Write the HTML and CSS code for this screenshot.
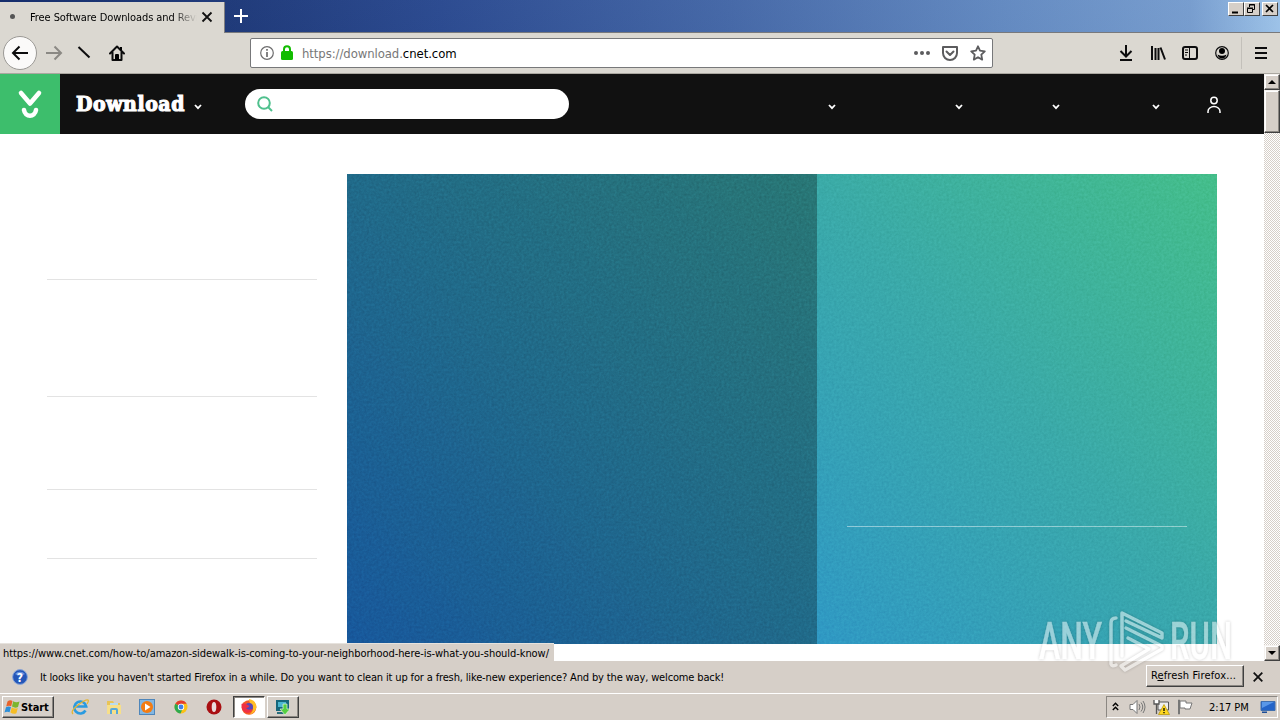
FILE: index.html
```html
<!DOCTYPE html>
<html lang="en">
<head>
    <meta charset="UTF-8">
    <meta name="viewport" content="width=device-width, initial-scale=1.0">
    <title>Free Software Downloads and Reviews</title>
    <link rel="stylesheet" href="styles.css">
</head>
<body>
    <!-- Tabs -->
    <div class="titlebar">
        <div class="tab">
            <span class="tab-dot"></span>
            <span class="tab-title">Free Software Downloads and Reviews</span>
            <svg class="tab-close" width="12" height="12" viewBox="0 0 12 12"><path d="M1.5 1.5l9 9M10.5 1.5l-9 9" stroke="#111" stroke-width="1.8"/></svg>
        </div>
        <svg class="new-tab" width="14" height="14" viewBox="0 0 14 14"><path d="M7 0v14M0 7h14" stroke="#fff" stroke-width="2"/></svg>
        <div class="window-buttons">
            <span class="win-btn"><svg width="15" height="14"><path d="M4 10.5h6" stroke="#000" stroke-width="2"/></svg></span>
            <span class="win-btn"><svg width="15" height="14" fill="none" stroke="#000"><path d="M5.5 5V2.500h5v5H9M5 3h6M3.500 6.500h5v4h-5zM3 6h6"/></svg></span>
            <span class="win-btn win-close"><svg width="15" height="14"><path d="M4 3l7 7M11 3l-7 7" stroke="#000" stroke-width="1.700"/></svg></span>
        </div>
    </div>

    <!-- Navigation toolbar -->
    <div class="toolbar">
        <span class="back"><svg width="18" height="16" viewBox="0 0 18 16" fill="none" stroke="#0c0c0d" stroke-width="2"><path d="M17 8H2M8.500 1.500L2 8l6.500 6.500"/></svg></span>
        <svg class="forward" width="18" height="16" viewBox="0 0 18 16" fill="none" stroke="#8b8984" stroke-width="2"><path d="M1 8h15M9.500 1.500L16 8l-6.500 6.500"/></svg>
        <svg class="reload" width="14" height="14" viewBox="0 0 14 14"><path d="M1.500 1l11 10.500" stroke="#0c0c0d" stroke-width="2"/></svg>
        <svg class="home" width="16" height="16" viewBox="0 0 16 16"><path d="M1 8.500L8 1.500l7 7M3.500 7.500V15h9V7.500" fill="none" stroke="#0c0c0d" stroke-width="2" stroke-linejoin="round" stroke-linecap="round"/><path d="M6 15v-5q0-1 1-1h2q1 0 1 1v5zM11 2h2v3h-2z"/></svg>
        <div class="urlbar">
            <svg width="14" height="14" viewBox="0 0 14 14"><circle cx="7" cy="7" r="6.300" fill="none" stroke="#6d6d6e" stroke-width="1.200"/><path d="M7 6v5M7 3v1.700" stroke="#6d6d6e" stroke-width="1.700"/></svg>
            <svg class="lock" width="12" height="15" viewBox="0 0 12 15"><rect y="6" width="12" height="9" rx="1.500" fill="#12bc00"/><path d="M3 7V4.200a3 3 0 0 1 6 0V7" fill="none" stroke="#12bc00" stroke-width="2"/></svg>
            <span class="url">https://download.<b>cnet.com</b></span>
            <svg class="dots" width="16" height="4" viewBox="0 0 16 4" fill="#5c5c5e"><circle cx="2" cy="2" r="2"/><circle cx="8" cy="2" r="2"/><circle cx="14" cy="2" r="2"/></svg>
            <svg class="pocket" width="16" height="15" viewBox="0 0 16 15" fill="none" stroke="#5c5c5e" stroke-width="2" stroke-linejoin="round"><path d="M1 1h14v6a7 7 0 0 1-14 0z"/><path d="M4.500 5.500L8 9l3.500-3.500" stroke-linecap="round"/></svg>
            <svg class="star" width="16" height="16" viewBox="0 0 16 16"><path d="M8 1.300l2 4.400 4.800.6-3.500 3.300.9 5L8 12.200l-4.200 2.400.9-5L1.200 6.300 6 5.700z" fill="none" stroke="#5c5c5e" stroke-width="1.800" stroke-linejoin="round"/></svg>
        </div>
        <div class="toolbar-right">
            <svg width="16" height="16" viewBox="0 0 16 16" fill="none" stroke="#0c0c0d" stroke-width="2"><path d="M8 0v11M2.500 6L8 11.500 13.500 6M2 15h12"/></svg>
            <svg width="16" height="16" viewBox="0 0 16 16" fill="none" stroke="#0c0c0d" stroke-width="2"><path d="M2 1v14M5.500 3v12M8.500 3v12M10.500 2.500L15 14.500"/></svg>
            <svg width="16" height="16" viewBox="0 0 16 16" fill="none" stroke="#0c0c0d" stroke-width="2"><rect x="1" y="2" width="14" height="12" rx="2"/><path d="M7.500 2v12M3 5h3M3 7.500h3M3 10h2" stroke-width="1"/></svg>
            <svg width="16" height="16" viewBox="0 0 16 16"><circle cx="8" cy="8" r="6.300" fill="none" stroke="#0c0c0d" stroke-width="1.200"/><circle cx="8" cy="6" r="3"/><path d="M3.500 9.500q4.500 2.500 9 0-1 4-4.500 4t-4.500-4z"/></svg>
            <span class="separator"></span>
            <svg class="menu" width="12" height="12" viewBox="0 0 12 12" stroke="#0c0c0d" stroke-width="2"><path d="M0 1h12M0 6h12M0 11h12"/></svg>
        </div>
    </div>

    <!-- Page -->
    <div class="viewport">
        <div class="page">
            <header class="site-header">
                <div class="logo">
                    <svg width="26" height="30" viewBox="0 0 26 30" fill="none" stroke="#fff" stroke-linecap="round" stroke-linejoin="round"><path d="M4 4l9 10.500L22 4" stroke-width="4.600"/><path d="M7 21c1.200 7.600 10.800 7.600 12 0" stroke-width="4.600"/></svg>
                </div>
                <span class="site-name">Download</span>
                <svg class="caret" viewBox="0 0 8 6"><path d="M1 1l3 3.200L7 1"/></svg>
                <div class="search">
                    <svg width="16" height="16" viewBox="0 0 16 16" fill="none" stroke="#4fc08d" stroke-width="2"><circle cx="7" cy="7" r="5.800"/><path d="M11 11l4 4"/></svg>
                </div>
                <nav class="site-nav">
                    <svg class="caret" viewBox="0 0 8 6"><path d="M1 1l3 3.200L7 1"/></svg>
                    <svg class="caret" viewBox="0 0 8 6"><path d="M1 1l3 3.200L7 1"/></svg>
                    <svg class="caret" viewBox="0 0 8 6"><path d="M1 1l3 3.200L7 1"/></svg>
                    <svg class="caret" viewBox="0 0 8 6"><path d="M1 1l3 3.200L7 1"/></svg>
                    <svg class="user" width="14" height="18" viewBox="0 0 14 18" fill="none" stroke="#fff" stroke-width="1.500"><circle cx="7" cy="4.500" r="3.200"/><path d="M1 17v-1.500a6 5 0 0 1 12 0V17"/></svg>
                </nav>
            </header>
            <main class="content">
                <aside class="sidebar">
                    <div class="side-item item-1"></div>
                    <div class="side-item item-2"></div>
                    <div class="side-item item-3"></div>
                    <div class="side-item item-4"></div>
                </aside>
                <section class="hero">
                    <svg class="grain" width="870" height="470">
                        <filter id="noise" x="0" y="0" width="100%" height="100%" color-interpolation-filters="sRGB"><feTurbulence type="fractalNoise" baseFrequency="0.4" numOctaves="3"/><feColorMatrix values="1 0 0 0 0  1 0 0 0 0  1 0 0 0 0  0 0 0 0 1"/></filter>
                        <rect width="870" height="470" filter="url(#noise)"/>
                    </svg>
                    <div class="hero-main"></div>
                    <div class="hero-side"><div class="hero-line"></div></div>
                </section>
            </main>
        </div>
        <div class="scrollbar">
            <span class="scroll-btn"><svg width="8" height="4"><path d="M0 4l4-4 4 4z"/></svg></span>
            <span class="scroll-thumb"></span>
            <span class="scroll-btn scroll-down"><svg width="8" height="4"><path d="M0 0l4 4 4-4z"/></svg></span>
        </div>
        <div class="status">https://www.cnet.com/how-to/amazon-sidewalk-is-coming-to-your-neighborhood-here-is-what-you-should-know/</div>
    </div>

    <!-- Notification -->
    <div class="notification">
        <svg width="16" height="16" viewBox="0 0 16 16"><circle cx="8" cy="8" r="7.400" fill="#2456b8" stroke="#8aa6d8"/><path d="M3 5a6 5 0 0 1 10 0q-5 3-10 0" fill="#6b94e0"/><text x="8" y="12.500" class="help-mark">?</text></svg>
        <span class="message">It looks like you haven't started Firefox in a while. Do you want to clean it up for a fresh, like-new experience? And by the way, welcome back!</span>
        <button class="refresh">R<u>e</u>fresh Firefox...</button>
        <svg class="note-close" width="10" height="10" viewBox="0 0 10 10"><path d="M.7.7l8.600 8.600M9.300.7L.7 9.300" stroke="#111" stroke-width="1.800"/></svg>
    </div>

    <!-- Taskbar -->
    <div class="taskbar">
        <div class="start">
            <svg width="16" height="16" viewBox="0 0 16 16"><path d="M3.500 2.500Q6 .5 8.500 2L7.200 7.200Q4.800 6 2.200 7.500z" fill="#e8632a"/><path d="M9.200 2.300q3 1.700 6.300.2L14 8q-3 1.500-6-.5z" fill="#7cb52c"/><path d="M2 8.200q2.500-1.500 5-.2L5.600 13.200Q3 12 .5 13.500z" fill="#2d8fd8"/><path d="M7.800 8.300q3 2 6 .6L12.400 14.200q-3 1.300-6-.7z" fill="#f6bd25"/></svg>
            <span>Start</span>
        </div>
        <div class="launch">
            <svg viewBox="0 0 18 18" fill="none"><path d="M14.500 12.500a6 6 0 1 1 .7-4H5" stroke="#2a9be0" stroke-width="2.600"/><path d="M2 16q-3-3 5-9t10-5q1 1-1 4" stroke="#e5b532" stroke-width="1.300"/></svg>
            <svg viewBox="0 0 18 18"><path d="M2 3h6l1 2h6v10H2z" fill="#e9c457"/><path d="M5 5h8v4H5z" fill="#b7dcf0"/><path d="M2 7h14v9H2z" fill="#f7df89"/><path d="M5 16v-4q0-2 2-2h4q2 0 2 2v4h-2v-4H7v4z" fill="#58a8d8"/></svg>
            <svg viewBox="0 0 18 18"><rect x="1.500" y="1.500" width="15" height="15" fill="#83b7e2" stroke="#4f86ba"/><circle cx="9" cy="9" r="6" fill="#f47c12"/><path d="M7 5.500v7L12.500 9z" fill="#fff"/></svg>
            <svg viewBox="0 0 18 18"><circle cx="9" cy="9" r="6.500" fill="#fbc116"/><path d="M9 9L3.300 5.800A6.500 6.500 0 0 1 14.700 5.800H9z" fill="#e33b2e"/><path d="M9 9L3.300 5.800A6.500 6.500 0 0 0 8.500 15.500L11 10z" fill="#2da94f"/><circle cx="9" cy="9" r="3.200" fill="#fff"/><circle cx="9" cy="9" r="2.400" fill="#3f7fe8"/></svg>
            <svg viewBox="0 0 18 18"><circle cx="9" cy="9" r="7.500" fill="#a90f12"/><ellipse cx="9" cy="9" rx="2.300" ry="5" fill="#e9dcdc"/></svg>
        </div>
        <div class="task active">
            <svg viewBox="0 0 18 18"><circle cx="9" cy="9.500" r="7.300" fill="#f55b24"/><path d="M9 1q7 1 7.500 8-1 6-7 7.500 5-4 3-9Q9 5 9 1z" fill="#ffbd27"/><circle cx="9" cy="9" r="4" fill="#5846b8"/><path d="M1.500 6q3-2 6 1l2 1q-1 2-3.500 2 2 3 6 1-1 4-5 4-6-1-5.500-9z" fill="#ef3044"/></svg>
        </div>
        <div class="task">
            <svg viewBox="0 0 18 18"><path d="M2 2h13v11H2z" fill="#16677c"/><path d="M4 4h8v5H4z" fill="#4bb6d0"/><path d="M3 14h8v2H3z" fill="#276c7c"/><path d="M9 6h4v5h3l-5 6-5-6h3z" fill="#55cf42" stroke="#e4f5df" stroke-width=".7"/></svg>
        </div>
        <div class="tray">
            <svg width="7" height="10" viewBox="0 0 7 10" fill="none" stroke="#000" stroke-width="1.400"><path d="M.8 4l2.700-2.700L6.200 4M.8 8l2.700-2.700L6.200 8"/></svg>
            <svg class="volume" width="17" height="16" viewBox="0 0 17 16" fill="none" stroke="#777"><path d="M1 5.500h3l4-4v13l-4-4H1z" fill="#fff"/><path d="M10 5q2 3 0 6M12 3.500q3.500 4.500 0 9M14 2q4 6 0 12"/></svg>
            <svg class="network" width="17" height="16" viewBox="0 0 17 16"><path d="M5 3h10.500v8H5zM7 14h7" fill="#eee" stroke="#555"/><path d="M1 1v4h5V1M3.500 5v10" fill="#fff" stroke="#555" stroke-width="1.300"/><path d="M11 5.500l5.500 10h-11z" fill="#ffd820" stroke="#b49200" stroke-width=".7"/><path d="M11 9v3M11 13v1.300" stroke="#000" stroke-width="1.300"/></svg>
            <svg class="flag" width="17" height="16" viewBox="0 0 17 16" fill="#fff" stroke="#777"><path d="M1.500 1v14h1V1zM3 2h6v2h6l-2 6H8V9H3z"/></svg>
            <span class="clock">2:17 PM</span>
            <svg class="desktop" width="16" height="14" viewBox="0 0 16 14"><path d="M1 1.500h14v9H1z" fill="#2464c8" stroke="#416fae"/><path d="M2 2h12L2 8z" fill="#5997e8"/><path d="M2 11.500h5v1.500H2z" fill="#1d4d96"/></svg>
        </div>
    </div>

    <!-- Watermark over the recording -->
    <svg class="watermark" width="200" height="70" viewBox="0 0 200 70">
        <text x="3" y="49" textLength="63" lengthAdjust="spacingAndGlyphs">ANY</text>
        <text x="134" y="49" textLength="62" lengthAdjust="spacingAndGlyphs">RUN</text>
        <path d="M80 8q-5 0-5 5v41q1 3 5 1M86 46V3l40 20v5L90 11M90 18l36 18v3L89 60l-4-4 28-17-21-11"/>
    </svg>
</body>
</html>
```
FILE: styles.css
```css
* {
    box-sizing: border-box;
}
body {
    margin: 0;
    width: 1280px;
    height: 720px;
    overflow: hidden;
    display: flex;
    flex-direction: column;
    position: relative;
    background-color: #fff;
    color: #000;
    font-family: "DejaVu Sans Condensed", "DejaVu Sans", sans-serif;
    font-stretch: condensed;
    font-size: 11px;
}
svg {
    display: block;
    flex: none;
}

/* Tabs */
.titlebar {
    height: 33px;
    flex: none;
    display: flex;
    align-items: flex-start;
    background: linear-gradient(170deg, rgba(255, 255, 255, 0.04), rgba(0, 0, 0, 0.04)), linear-gradient(90deg, #0c2566 0, #1a3678 240px, #284890 440px, #4569aa 730px, #658dc6 1000px, #7ba2d5 1190px, #a3caf1 1280px);
    border-bottom: 1px solid #78797c;
}
.tab {
    width: 225px;
    height: 31px;
    margin-top: 2px;
    display: flex;
    align-items: center;
    padding-bottom: 2px;
    background-color: #dbd8d1;
    border-right: 1px solid #807f80;
}
.tab-dot {
    width: 5px;
    height: 5px;
    margin-left: 10px;
    border-radius: 50%;
    background-color: #555;
}
.tab-title {
    width: 167px;
    margin-left: 15px;
    padding-top: 1px;
    overflow: hidden;
    white-space: nowrap;
    letter-spacing: -0.08px;
    -webkit-mask-image: linear-gradient(90deg, #000 142px, transparent 167px);
    mask-image: linear-gradient(90deg, #000 142px, transparent 167px);
}
.tab-close {
    margin-left: 4px;
}
.new-tab {
    margin: 9px 0 0 9px;
}
.window-buttons {
    display: flex;
    margin: 2px 2px 0 auto;
}
.win-btn {
    width: 16px;
    height: 14px;
    background-color: #d6cfc8;
    border: 1px solid;
    border-color: #fff #404040 #404040 #fff;
}
.win-btn svg {
    margin: -1px;
}
.win-close {
    margin-left: 2px;
}

/* Navigation toolbar */
.toolbar {
    height: 41px;
    flex: none;
    display: flex;
    align-items: center;
    background-color: #dbd8d1;
    border-bottom: 1px solid #aaa7a0;
}
.back {
    width: 34px;
    height: 34px;
    margin-left: 3px;
    display: flex;
    align-items: center;
    justify-content: center;
    border: 1px solid #9b9995;
    border-radius: 50%;
    background-color: #fbfaf9;
}
.forward {
    margin-left: 8px;
}
.reload {
    margin-left: 14px;
}
.home {
    margin-left: 18px;
}
.urlbar {
    width: 743px;
    height: 30px;
    margin-left: 125px;
    padding: 0 6px 0 9px;
    display: flex;
    align-items: center;
    background-color: #fff;
    border: 1px solid #77787a;
    border-radius: 2px;
}
.lock {
    margin: -2px 0 0 7px;
}
.url {
    margin-left: 9px;
    color: #777;
    font-size: 13px;
    letter-spacing: -0.08px;
}
.url b {
    color: #000;
    font-weight: normal;
}
.dots {
    margin-left: auto;
}
.pocket {
    margin-left: 12px;
}
.star {
    margin-left: 12px;
}
.toolbar-right {
    margin: 0 13px 0 auto;
    display: flex;
    align-items: center;
    gap: 16px;
}
.separator {
    width: 1px;
    height: 32px;
    margin-left: -5px;
    background-color: #c3c0ba;
}
.menu {
    margin-left: -3px;
}

/* Page */
.viewport {
    height: 587px;
    flex: none;
    display: flex;
    position: relative;
}
.page {
    width: 1264px;
}
.site-header {
    height: 60px;
    display: flex;
    align-items: center;
    background-color: #111;
}
.logo {
    width: 60px;
    height: 60px;
    display: flex;
    align-items: center;
    justify-content: center;
    background-color: #3dbe6c;
}
.site-name {
    width: 109px;
    margin: -2px 0 0 16px;
    color: #fff;
    font-family: "DejaVu Serif", serif;
    font-stretch: condensed;
    font-size: 21px;
    font-weight: bold;
    letter-spacing: 0.6px;
    -webkit-text-stroke: 1.1px #fff;
}
.caret {
    width: 8px;
    height: 6px;
    margin-top: 6px;
    fill: none;
    stroke: #fff;
    stroke-width: 1.8;
}
.site-name + .caret {
    margin-left: 9px;
}
.search {
    width: 324px;
    height: 30px;
    margin-left: 43px;
    padding-left: 12px;
    display: flex;
    align-items: center;
    background-color: #fff;
    border-radius: 15px;
}
.site-nav {
    display: flex;
    align-items: center;
    margin-left: 259px;
}
.site-nav .caret:nth-child(2) {
    margin-left: 119px;
}
.site-nav .caret:nth-child(3) {
    margin-left: 89px;
}
.site-nav .caret:nth-child(4) {
    margin-left: 92px;
}
.user {
    margin: 1px 0 0 47px;
}
.content {
    display: flex;
    gap: 30px;
    padding: 40px 47px 0;
}
.sidebar {
    width: 270px;
}
.side-item {
    border-bottom: 1px solid #e3e3e3;
}
.item-1 {
    height: 106px;
}
.item-2 {
    height: 117px;
}
.item-3 {
    height: 93px;
}
.item-4 {
    height: 69px;
}
.hero {
    width: 870px;
    height: 470px;
    display: flex;
    position: relative;
    isolation: isolate;
    background: linear-gradient(45deg, #227edf, #2f98c4 35%, #3aa9a9 68%, #44be8a);
}
.grain {
    position: absolute;
    top: 0;
    left: 0;
    opacity: 0.12;
    mix-blend-mode: overlay;
}
.hero-main {
    width: 470px;
    background-color: rgba(0, 0, 0, 0.3);
}
.hero-side {
    width: 400px;
    padding: 352px 30px 0;
}
.hero-line {
    height: 1px;
    background-color: rgba(255, 255, 255, 0.45);
}

/* Scrollbar */
.scrollbar {
    width: 16px;
    display: flex;
    flex-direction: column;
    background: repeating-conic-gradient(#fff 0 25%, #d6cfc8 0 50%) 0 0 / 2px 2px;
}
.scroll-btn,
.scroll-thumb {
    height: 16px;
    display: flex;
    align-items: center;
    justify-content: center;
    background-color: #d6cfc8;
    border: 1px solid;
    border-color: #f5f2ef #404040 #404040 #f5f2ef;
    box-shadow: inset -1px -1px #8b8782, inset 1px 1px #fff;
}
.scroll-thumb {
    height: 43px;
}
.scroll-down {
    margin-top: auto;
}
.status {
    position: absolute;
    left: 0;
    bottom: 0;
    width: 554px;
    height: 18px;
    padding-left: 3px;
    line-height: 19px;
    white-space: nowrap;
    letter-spacing: -0.065px;
    background-color: #d6cfc8;
    border-top: 1px solid #e6e2dd;
}

/* Notification */
.notification {
    height: 32px;
    flex: none;
    display: flex;
    align-items: center;
    padding-left: 12px;
    background-color: #d6cfc8;
}
.help-mark {
    fill: #fff;
    font-size: 12px;
    font-weight: bold;
    text-anchor: middle;
}
.message {
    margin-left: 12px;
    white-space: nowrap;
    letter-spacing: -0.145px;
}
.refresh {
    width: 98px;
    height: 22px;
    margin: -3px 9px 0 auto;
    padding: 0 3px 0 0;
    font: inherit;
    white-space: nowrap;
    letter-spacing: 0.15px;
    background-color: #d6cfc8;
    border: 1px solid;
    border-color: #fff #404040 #404040 #fff;
    box-shadow: inset -1px -1px #8b8782;
}
.note-close {
    margin-right: 17px;
}

/* Taskbar */
.taskbar {
    height: 27px;
    flex: none;
    display: flex;
    align-items: center;
    background-color: #d6cfc8;
    border-top: 1px solid #fff;
}
.start {
    width: 52px;
    height: 22px;
    margin-left: 2px;
    padding-left: 1px;
    display: flex;
    align-items: center;
    gap: 1px;
    font-weight: bold;
    letter-spacing: -0.1px;
    border: 1px solid;
    border-color: #fff #404040 #404040 #fff;
    box-shadow: inset -1px -1px #8b8782;
}
.launch {
    display: flex;
    gap: 15.500px;
    margin-left: 17px;
}
.launch svg,
.task svg {
    width: 18px;
    height: 18px;
}
.task {
    width: 32px;
    height: 22px;
    margin-left: 2px;
    display: flex;
    align-items: center;
    justify-content: center;
    border: 1px solid;
    border-color: #fff #404040 #404040 #fff;
    box-shadow: inset -1px -1px #8b8782;
}
.task.active {
    margin-left: 10px;
    background-color: #fff;
    border-color: #404040 #fff #fff #404040;
    box-shadow: inset 1px 1px #8b8782;
}
.tray {
    width: 172px;
    height: 22px;
    margin: 0 2px 0 auto;
    padding-left: 5px;
    display: flex;
    align-items: center;
    border: 1px solid;
    border-color: #8b8782 #fff #fff #8b8782;
}
.volume {
    margin-left: 10px;
}
.network {
    margin-left: 7px;
}
.flag {
    margin-left: 7px;
}
.clock {
    width: 42px;
    margin-left: 15px;
    white-space: nowrap;
}
.desktop {
    margin-left: 9px;
}

/* Watermark */
.watermark {
    position: absolute;
    left: 1036px;
    top: 610px;
    overflow: visible;
    opacity: 0.5;
    filter: drop-shadow(0 0 1.5px rgba(0, 0, 0, 0.4));
}
.watermark text {
    fill: #fff;
    stroke: #fff;
    stroke-width: 0.5px;
    font-family: Roboto, sans-serif;
    font-stretch: normal;
    font-size: 52px;
    font-weight: 500;
}
.watermark path {
    fill: none;
    stroke: #fff;
    stroke-width: 3.5;
    stroke-linejoin: round;
    stroke-linecap: round;
}
```
